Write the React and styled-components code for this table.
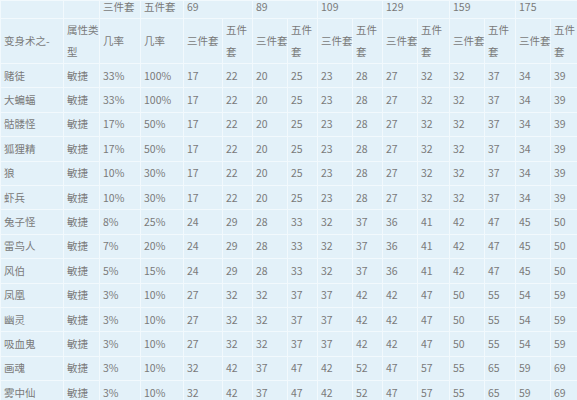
import React from "react";
import styled, { createGlobalStyle } from "styled-components";

const Global = createGlobalStyle`
  html, body { margin: 0; padding: 0; background: #e3f1f9; overflow: hidden; }
  body { font-family: "Noto Sans CJK SC", "Noto Sans", sans-serif; }
`;

const Page = styled.div`
  width: 577px;
  height: 400px;
  overflow: hidden;
  background: #e3f1f9;
`;

const Table = styled.table`
  table-layout: fixed;
  border-collapse: collapse;
  width: 580px;
  color: #7a7a7a;
  font-size: 10.5px;
`;

const Cell = styled.td`
  border: 1px solid #f2f9fd;
  padding: 0 0 0 3px;
  height: ${(p) => p.$h}px;
  line-height: ${(p) => p.$lh || 14}px;
  vertical-align: ${(p) => p.$va || "middle"};
  white-space: nowrap;
  ${(p) => p.$wrap && "white-space: normal; word-break: break-all;"}
`;

const widths = [63, 36, 41, 43, 39, 30, 35, 30, 35, 30, 35, 32, 35, 31, 35, 30];

const levels = ["69", "89", "109", "129", "159", "175"];

const data = [
  ["赌徒", "33%", "100%", "17 22 20 25 23 28 27 32 32 37 34 39"],
  ["大蝙蝠", "33%", "100%", "17 22 20 25 23 28 27 32 32 37 34 39"],
  ["骷髅怪", "17%", "50%", "17 22 20 25 23 28 27 32 32 37 34 39"],
  ["狐狸精", "17%", "50%", "17 22 20 25 23 28 27 32 32 37 34 39"],
  ["狼", "10%", "30%", "17 22 20 25 23 28 27 32 32 37 34 39"],
  ["虾兵", "10%", "30%", "17 22 20 25 23 28 27 32 32 37 34 39"],
  ["兔子怪", "8%", "25%", "24 29 28 33 32 37 36 41 42 47 45 50"],
  ["雷鸟人", "7%", "20%", "24 29 28 33 32 37 36 41 42 47 45 50"],
  ["风伯", "5%", "15%", "24 29 28 33 32 37 36 41 42 47 45 50"],
  ["凤凰", "3%", "10%", "27 32 32 37 37 42 42 47 50 55 54 59"],
  ["幽灵", "3%", "10%", "27 32 32 37 37 42 42 47 50 55 54 59"],
  ["吸血鬼", "3%", "10%", "27 32 32 37 37 42 42 47 50 55 54 59"],
  ["画魂", "3%", "10%", "32 42 37 47 42 52 47 57 55 65 59 69"],
  ["雾中仙", "3%", "10%", "32 42 37 47 42 52 47 57 55 65 59 69"],
];

export default function App() {
  return (
    <Page>
      <Global />
      <Table>
        <colgroup>
          {widths.map((w, i) => (
            <col key={i} style={{ width: w }} />
          ))}
        </colgroup>
        <tbody>
          <tr>
            <Cell $h={17} $va="top" />
            <Cell $h={17} $va="top" />
            <Cell $h={17} $va="top" $lh={12}>三件套</Cell>
            <Cell $h={17} $va="top" $lh={12}>五件套</Cell>
            {levels.map((l) => (
              <Cell key={l} colSpan={2} $h={17} $va="top" $lh={12}>
                {l}
              </Cell>
            ))}
          </tr>
          <tr>
            <Cell $h={44}>变身术之-</Cell>
            <Cell $h={44} $wrap $lh={22}>属性类型</Cell>
            <Cell $h={44}>几率</Cell>
            <Cell $h={44}>几率</Cell>
            {levels.map((l) => (
              <React.Fragment key={l}>
                <Cell $h={44}>三件套</Cell>
                <Cell $h={44} $wrap $lh={22}>五件套</Cell>
              </React.Fragment>
            ))}
          </tr>
          {data.map(([name, r3, r5, nums]) => (
            <tr key={name}>
              <Cell $h={23.4}>{name}</Cell>
              <Cell $h={23.4}>敏捷</Cell>
              <Cell $h={23.4}>{r3}</Cell>
              <Cell $h={23.4}>{r5}</Cell>
              {nums.split(" ").map((n, i) => (
                <Cell key={i} $h={23.4}>{n}</Cell>
              ))}
            </tr>
          ))}
        </tbody>
      </Table>
    </Page>
  );
}
